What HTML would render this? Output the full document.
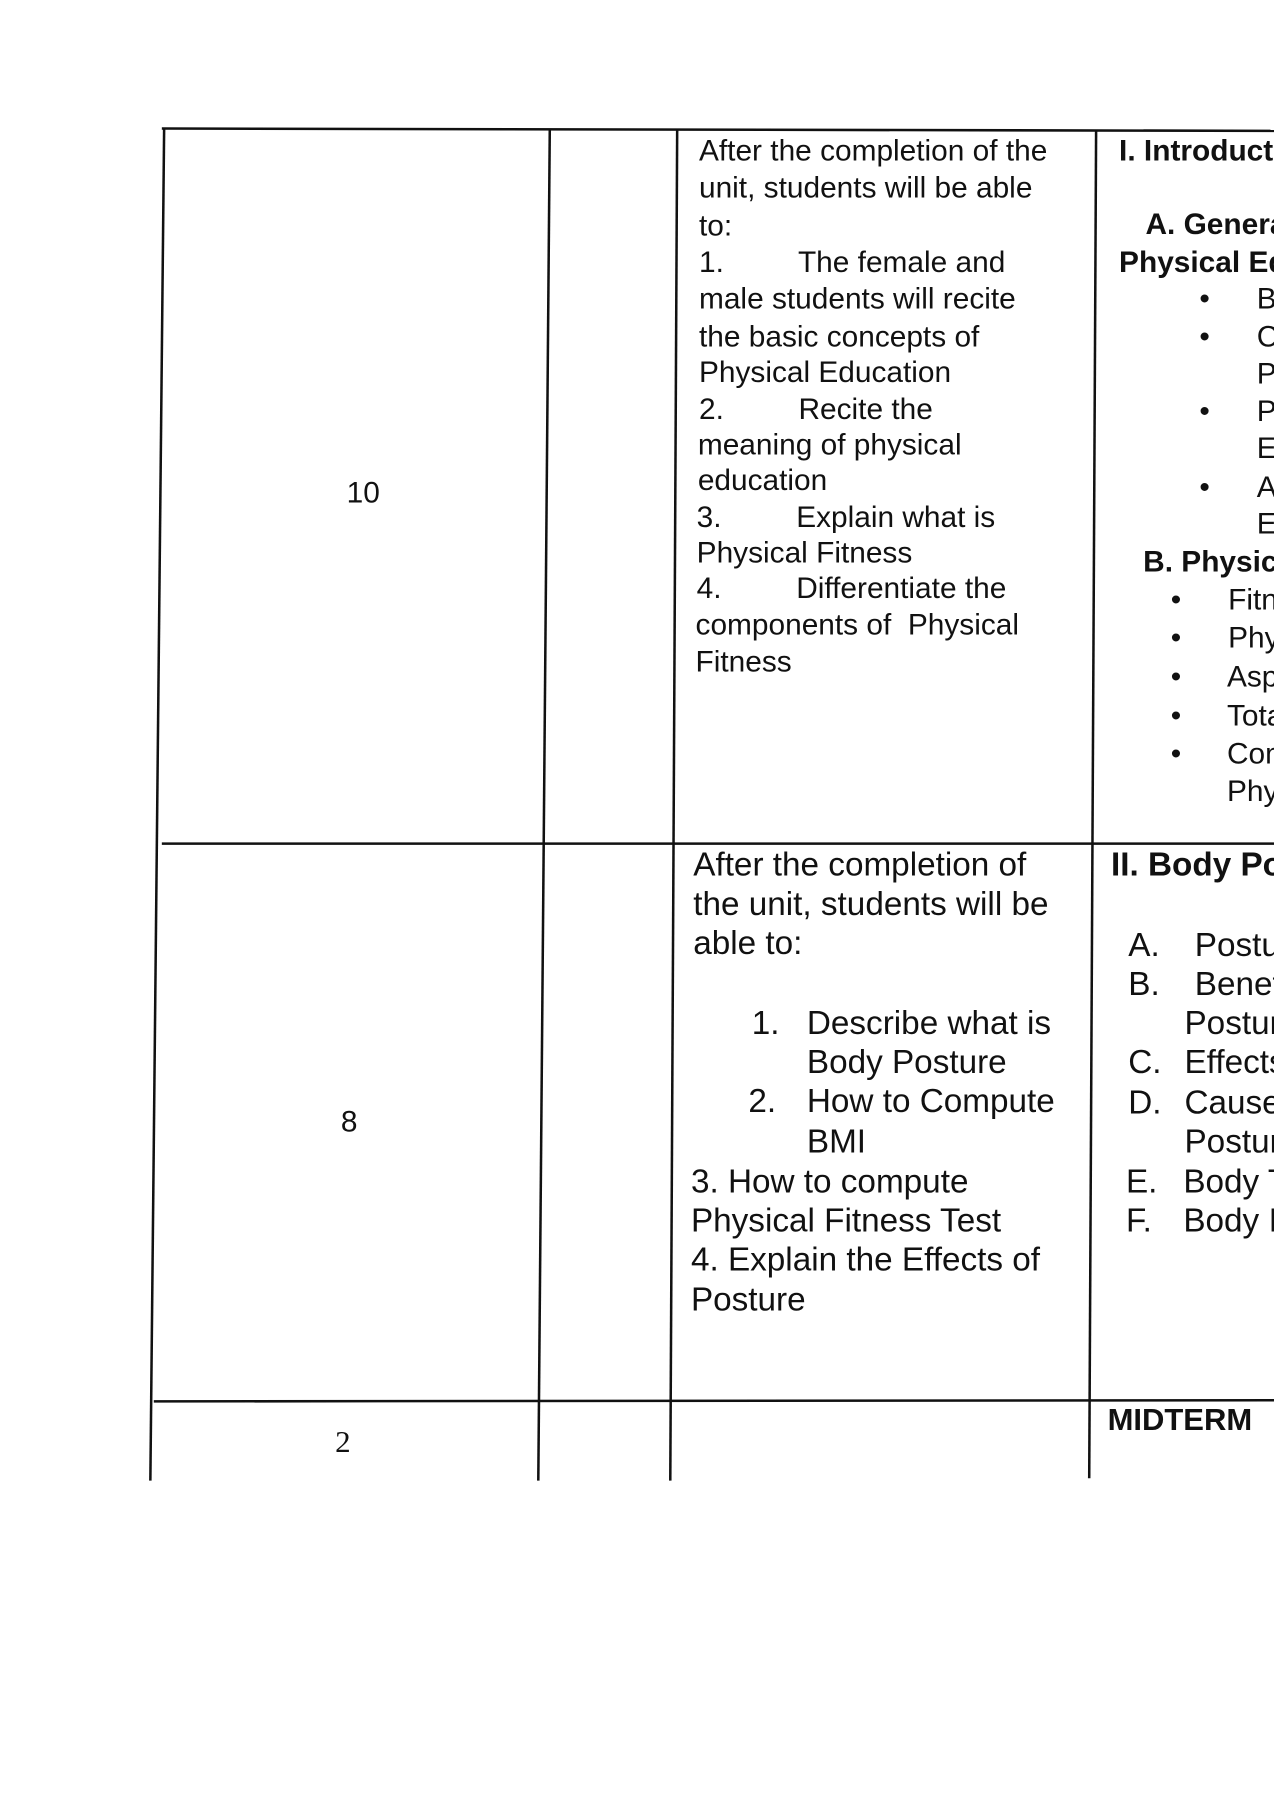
<!DOCTYPE html>
<html><head><meta charset="utf-8"><style>
html,body{margin:0;padding:0;background:#fff;}
body{width:1274px;height:1800px;overflow:hidden;position:relative;}
#w{position:absolute;left:0;top:0;width:1110px;height:1568px;transform:scale(1.14775);transform-origin:0 0;overflow:hidden;}
.t{position:absolute;white-space:pre;font-family:"Liberation Sans",Arial,sans-serif;font-size:26px;line-height:28px;color:#111;}
.b{font-weight:bold;}
.r2{font-size:29px;line-height:30px;}
svg{position:absolute;left:0;top:0;}
</style></head><body><div id="w">
<svg width="1110" height="1568">
<g stroke="#111" stroke-width="2.2" fill="none">
<line x1="141" y1="112" x2="1110" y2="114"/>
<line x1="143" y1="112" x2="131" y2="1290"/>
<line x1="479" y1="113" x2="469" y2="1290"/>
<line x1="590" y1="113" x2="584" y2="1290"/>
<line x1="955" y1="114" x2="949" y2="1288"/>
<line x1="141" y1="735" x2="1110" y2="735"/>
<line x1="134" y1="1221" x2="1110" y2="1220"/>
</g></svg>
<div class="t" style="left:302px;top:415px">10</div>
<div class="t" style="left:609px;top:117px">After the completion of the</div>
<div class="t" style="left:609px;top:149px">unit, students will be able</div>
<div class="t" style="left:609px;top:182px">to:</div>
<div class="t" style="left:609px;top:214px">1.         The female and</div>
<div class="t" style="left:609px;top:246px">male students will recite</div>
<div class="t" style="left:609px;top:279px">the basic concepts of</div>
<div class="t" style="left:609px;top:310px">Physical Education</div>
<div class="t" style="left:609px;top:342px">2.         Recite the</div>
<div class="t" style="left:608px;top:373px">meaning of physical</div>
<div class="t" style="left:608px;top:404px">education</div>
<div class="t" style="left:607px;top:436px">3.         Explain what is</div>
<div class="t" style="left:607px;top:467px">Physical Fitness</div>
<div class="t" style="left:607px;top:498px">4.         Differentiate the</div>
<div class="t" style="left:606px;top:530px">components of  Physical</div>
<div class="t" style="left:606px;top:562px">Fitness</div>
<div class="t b" style="left:975px;top:117px">I. Introduction</div>
<div class="t b" style="left:998px;top:181px">A. General</div>
<div class="t b" style="left:975px;top:214px">Physical Education</div>
<div class="t" style="left:1045px;top:246px">•</div><div class="t" style="left:1095px;top:246px">B</div>
<div class="t" style="left:1045px;top:279px">•</div><div class="t" style="left:1095px;top:279px">C</div>
<div class="t" style="left:1095px;top:311px">P</div>
<div class="t" style="left:1045px;top:344px">•</div><div class="t" style="left:1095px;top:344px">P</div>
<div class="t" style="left:1095px;top:376px">E</div>
<div class="t" style="left:1045px;top:410px">•</div><div class="t" style="left:1095px;top:410px">A</div>
<div class="t" style="left:1095px;top:442px">E</div>
<div class="t b" style="left:996px;top:475px">B. Physical</div>
<div class="t" style="left:1020px;top:508px">•</div><div class="t" style="left:1070px;top:508px">Fitness</div>
<div class="t" style="left:1020px;top:541px">•</div><div class="t" style="left:1070px;top:541px">Physical</div>
<div class="t" style="left:1020px;top:575px">•</div><div class="t" style="left:1069px;top:575px">Aspects</div>
<div class="t" style="left:1020px;top:609px">•</div><div class="t" style="left:1069px;top:609px">Total</div>
<div class="t" style="left:1020px;top:642px">•</div><div class="t" style="left:1069px;top:642px">Components</div>
<div class="t" style="left:1069px;top:675px">Physical</div>
<div class="t" style="left:297px;top:963px">8</div>
<div class="t r2" style="left:604px;top:739px">After the completion of</div>
<div class="t r2" style="left:604px;top:773px">the unit, students will be</div>
<div class="t r2" style="left:604px;top:807px">able to:</div>
<div class="t r2" style="left:655px;top:877px">1.</div>
<div class="t r2" style="left:703px;top:877px">Describe what is</div>
<div class="t r2" style="left:703px;top:911px">Body Posture</div>
<div class="t r2" style="left:652px;top:945px">2.</div>
<div class="t r2" style="left:703px;top:945px">How to Compute</div>
<div class="t r2" style="left:703px;top:980px">BMI</div>
<div class="t r2" style="left:602px;top:1015px">3. How to compute</div>
<div class="t r2" style="left:602px;top:1049px">Physical Fitness Test</div>
<div class="t r2" style="left:602px;top:1083px">4. Explain the Effects of</div>
<div class="t r2" style="left:602px;top:1118px">Posture</div>
<div class="t r2 b" style="left:968px;top:739px">II. Body Posture</div>
<div class="t r2" style="left:983px;top:809px">A.</div><div class="t r2" style="left:1041px;top:809px">Posture</div>
<div class="t r2" style="left:983px;top:843px">B.</div><div class="t r2" style="left:1041px;top:843px">Benefits</div>
<div class="t r2" style="left:1032px;top:877px">Posture</div>
<div class="t r2" style="left:983px;top:911px">C.</div><div class="t r2" style="left:1032px;top:911px">Effects</div>
<div class="t r2" style="left:983px;top:946px">D.</div><div class="t r2" style="left:1032px;top:946px">Causes</div>
<div class="t r2" style="left:1032px;top:980px">Posture</div>
<div class="t r2" style="left:981px;top:1015px">E.</div><div class="t r2" style="left:1031px;top:1015px">Body T</div>
<div class="t r2" style="left:981px;top:1049px">F.</div><div class="t r2" style="left:1031px;top:1049px">Body I</div>
<div class="t" style="left:292px;top:1242px;font-family:'Liberation Serif',serif;font-size:27px">2</div>
<div class="t b" style="left:965px;top:1223px;font-size:27px">MIDTERM</div>
</div></body></html>
